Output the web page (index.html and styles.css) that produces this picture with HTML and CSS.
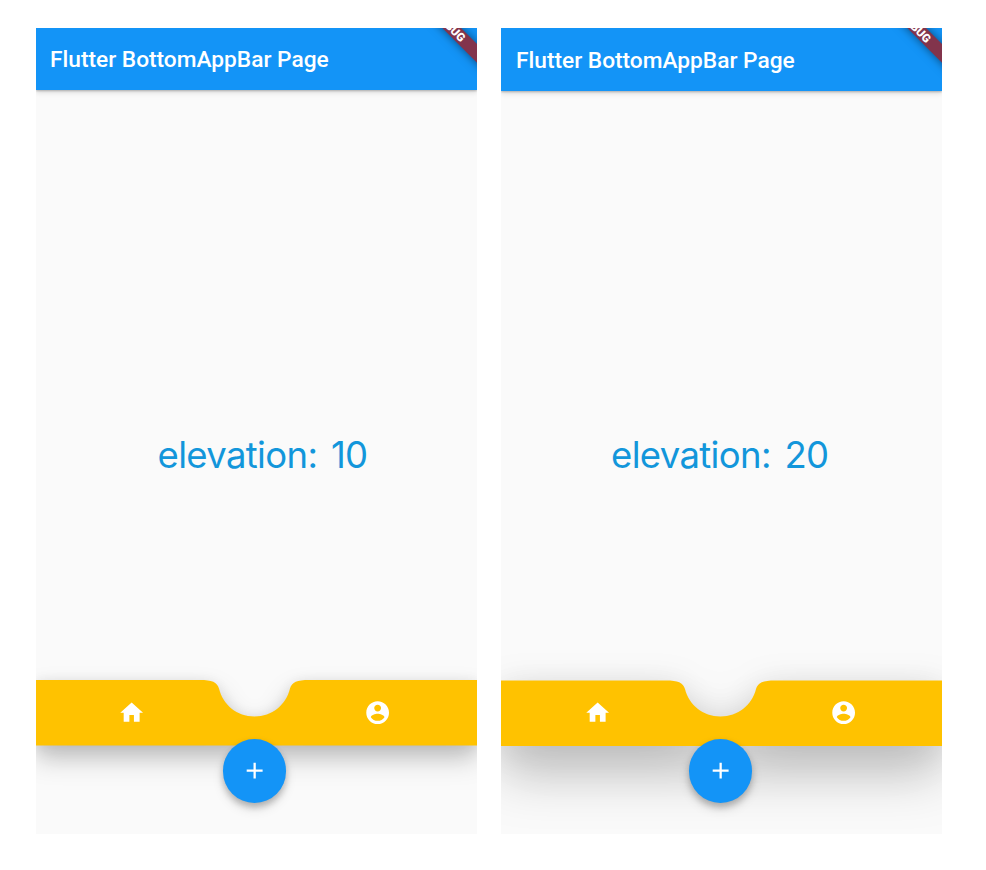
FILE: index.html
```html
<!DOCTYPE html>
<html lang="en">
<head>
<meta charset="utf-8">
<title>Flutter BottomAppBar Page</title>
<link rel="stylesheet" href="styles.css">
</head>
<body>
<main class="screens">
  <section class="screen low">
    <header class="app-bar">
      <h1 class="title">Flutter BottomAppBar Page</h1>
      <svg class="ribbon" width="60" height="62" viewBox="0 0 60 62">
        <path class="ribbon-band" d="M34 -10 80 36V54.700L15.300 -10Z"/>
        <text class="ribbon-text" transform="translate(33.300 -1.300) rotate(45)" text-anchor="middle" y="4">DEBUG</text>
      </svg>
    </header>
    <div class="content"><p class="label">elevation: <span class="num">10</span></p></div>
    <footer class="bottom">
      <svg class="bar-shape" width="441" height="66" viewBox="0 0 441 66">
        <path d="M0 0H164C176 0 181 2 183 8.500C187 25 201 36.500 218.500 36.500S250 25 254 8.500C256 2 261 0 273 0H441V65.500H0Z"/>
      </svg>
      <nav class="actions">
        <svg class="icon" viewBox="0 0 24 24"><path d="M10 20v-6h4v6h5v-8h3L12 3 2 12h3v8z"/></svg>
        <svg class="icon" viewBox="0 0 24 24"><path d="M12 2C6.480 2 2 6.480 2 12s4.480 10 10 10 10-4.480 10-10S17.520 2 12 2zm0 3c1.660 0 3 1.340 3 3s-1.340 3-3 3-3-1.340-3-3 1.340-3 3-3zm0 14.200c-2.500 0-4.710-1.280-6-3.220.030-1.990 4-3.080 6-3.080 1.990 0 5.970 1.090 6 3.080-1.290 1.940-3.500 3.220-6 3.220z"/></svg>
      </nav>
      <div class="fab"><svg class="icon" viewBox="0 0 24 24"><path d="M19 13h-6v6h-2v-6H5v-2h6V5h2v6h6v2z"/></svg></div>
    </footer>
  </section>
  <section class="screen high">
    <header class="app-bar">
      <h1 class="title">Flutter BottomAppBar Page</h1>
      <svg class="ribbon" width="60" height="62" viewBox="0 0 60 62">
        <path class="ribbon-band" d="M34 -10 80 36V54.700L15.300 -10Z"/>
        <text class="ribbon-text" transform="translate(33.800 -.3) rotate(45)" text-anchor="middle" y="4">DEBUG</text>
      </svg>
    </header>
    <div class="content"><p class="label">elevation: <span class="num">20</span></p></div>
    <footer class="bottom">
      <svg class="bar-shape" width="441" height="66" viewBox="0 0 441 66">
        <path d="M0 .5H165C177 .5 182 2.500 184 9C188 25 202 36.500 219.500 36.500S251 25 255 9C257 2.500 262 .5 274 .5H441V66H0Z"/>
      </svg>
      <nav class="actions">
        <svg class="icon" viewBox="0 0 24 24"><path d="M10 20v-6h4v6h5v-8h3L12 3 2 12h3v8z"/></svg>
        <svg class="icon" viewBox="0 0 24 24"><path d="M12 2C6.480 2 2 6.480 2 12s4.480 10 10 10 10-4.480 10-10S17.520 2 12 2zm0 3c1.660 0 3 1.340 3 3s-1.340 3-3 3-3-1.340-3-3 1.340-3 3-3zm0 14.200c-2.500 0-4.710-1.280-6-3.220.030-1.990 4-3.080 6-3.080 1.990 0 5.970 1.090 6 3.080-1.290 1.940-3.500 3.220-6 3.220z"/></svg>
      </nav>
      <div class="fab"><svg class="icon" viewBox="0 0 24 24"><path d="M19 13h-6v6h-2v-6H5v-2h6V5h2v6h6v2z"/></svg></div>
    </footer>
  </section>
</main>
</body>
</html>
```
FILE: styles.css
```css
* { box-sizing: border-box; }
body { margin: 0; background: #fff; font-family: Roboto, sans-serif; }
.screens { display: flex; gap: 24px; padding: 28px 36px; }
.screen {
  display: flex; flex-direction: column; flex: none;
  width: 441px; height: 806px; overflow: hidden; background: #fafafa;
}
.app-bar {
  position: relative; z-index: 1; display: flex; align-items: center; flex: none;
  height: 62px; padding-left: 14px; background: #1394f7;
  box-shadow: 0 1px 2px rgba(0,0,0,.25), 0 3px 5px rgba(0,0,0,.1);
}
.high .app-bar { height: 63px; padding: 2px 0 0 15px; }
.title { margin: 0; color: #fff; font-size: 22.700px; font-weight: 500; line-height: 27px; white-space: nowrap; }
.ribbon { position: absolute; top: 0; right: 0; overflow: hidden; }
.ribbon-band { fill: #82344c; filter: drop-shadow(0 0 5px rgba(0,0,0,.5)); }
.ribbon-text { fill: #fff; font: 900 11.600px Roboto, sans-serif; }
.content { flex: 1; padding-top: 341px; }
.high .content { padding-top: 340px; }
.label {
  margin: 0; padding-left: 121.500px; color: #1296db; white-space: nowrap;
  font: 400 36.500px/48px Inter, sans-serif; letter-spacing: -.65px; word-spacing: 4px;
}
.high .label { padding-left: 110px; }
.bottom { position: relative; flex: none; height: 154px; }
.bar-shape { display: block; overflow: visible; fill: #ffc200; }
.low .bar-shape { filter: drop-shadow(0 13px 13px rgba(0,0,0,.22)) drop-shadow(0 2px 7px rgba(0,0,0,.09)); }
.high .bar-shape { filter: drop-shadow(0 29px 26px rgba(0,0,0,.21)) drop-shadow(0 4px 16px rgba(0,0,0,.1)); }
.actions {
  position: absolute; inset: 0 0 auto; height: 66px; padding: 0 86px 0 82px;
  display: flex; align-items: center; justify-content: space-between;
}
.high .actions { padding: 0 85px 0 83px; }
.icon { width: 27.300px; height: 27.300px; fill: #fff; }
.fab {
  position: absolute; left: 186.500px; top: 59px; width: 63.500px; height: 63.500px; border-radius: 50%;
  display: flex; align-items: center; justify-content: center; background: #1394f7;
  box-shadow: 0 4px 6px rgba(0,0,0,.22), 0 6px 12px rgba(0,0,0,.12);
}
.high .fab { left: 187.500px; }
```
